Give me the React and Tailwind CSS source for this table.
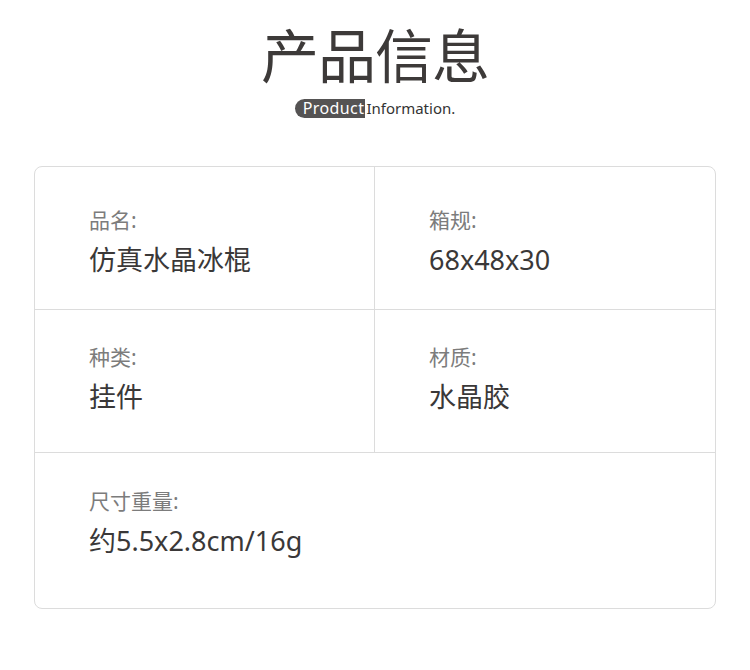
import React from "react";

const font = { fontFamily: '"Noto Sans", "Noto Sans CJK SC", sans-serif' };

const Cell = ({ label, value, className }) => (
  <div className={`flex flex-col pl-[54px] ${className}`}>
    <span className="text-[21px] leading-[28px] text-[#7c7c7c]">{label}</span>
    <span className="mt-[9px] text-[27px] leading-[34px] text-[#3a3838]">{value}</span>
  </div>
);

const App = () => {
  return (
    <div className="w-[750px] h-[670px] bg-white" style={font}>
      <div className="flex flex-col items-center pt-[24px]">
        <h1 className="text-[58px] leading-[64px] tracking-[-1px] text-[#3d3a39]">产品信息</h1>
        <div className="mt-[11px] flex items-center leading-[19px]">
          <span className="bg-[#555353] text-white text-[16px] tracking-[0.4px] rounded-l-full pl-[8px] pr-[1px]">Product</span>
          <span className="text-[#333] text-[15px] pl-[1px]">Information.</span>
        </div>
      </div>

      <div className="mx-[34px] mt-[48px] h-[443px] border border-[#dcdcdc] rounded-[8px] flex flex-col">
        <div className="flex h-[143px] border-b border-[#dcdcdc]">
          <Cell label="品名:" value="仿真水晶冰棍" className="w-[340px] border-r border-[#dcdcdc] pt-[39px]" />
          <Cell label="箱规:" value="68x48x30" className="flex-1 pt-[39px]" />
        </div>
        <div className="flex h-[143px] border-b border-[#dcdcdc]">
          <Cell label="种类:" value="挂件" className="w-[340px] border-r border-[#dcdcdc] pt-[33px]" />
          <Cell label="材质:" value="水晶胶" className="flex-1 pt-[33px]" />
        </div>
        <div className="flex flex-1">
          <Cell label="尺寸重量:" value="约5.5x2.8cm/16g" className="flex-1 pt-[34px]" />
        </div>
      </div>
    </div>
  );
};

export default App;
